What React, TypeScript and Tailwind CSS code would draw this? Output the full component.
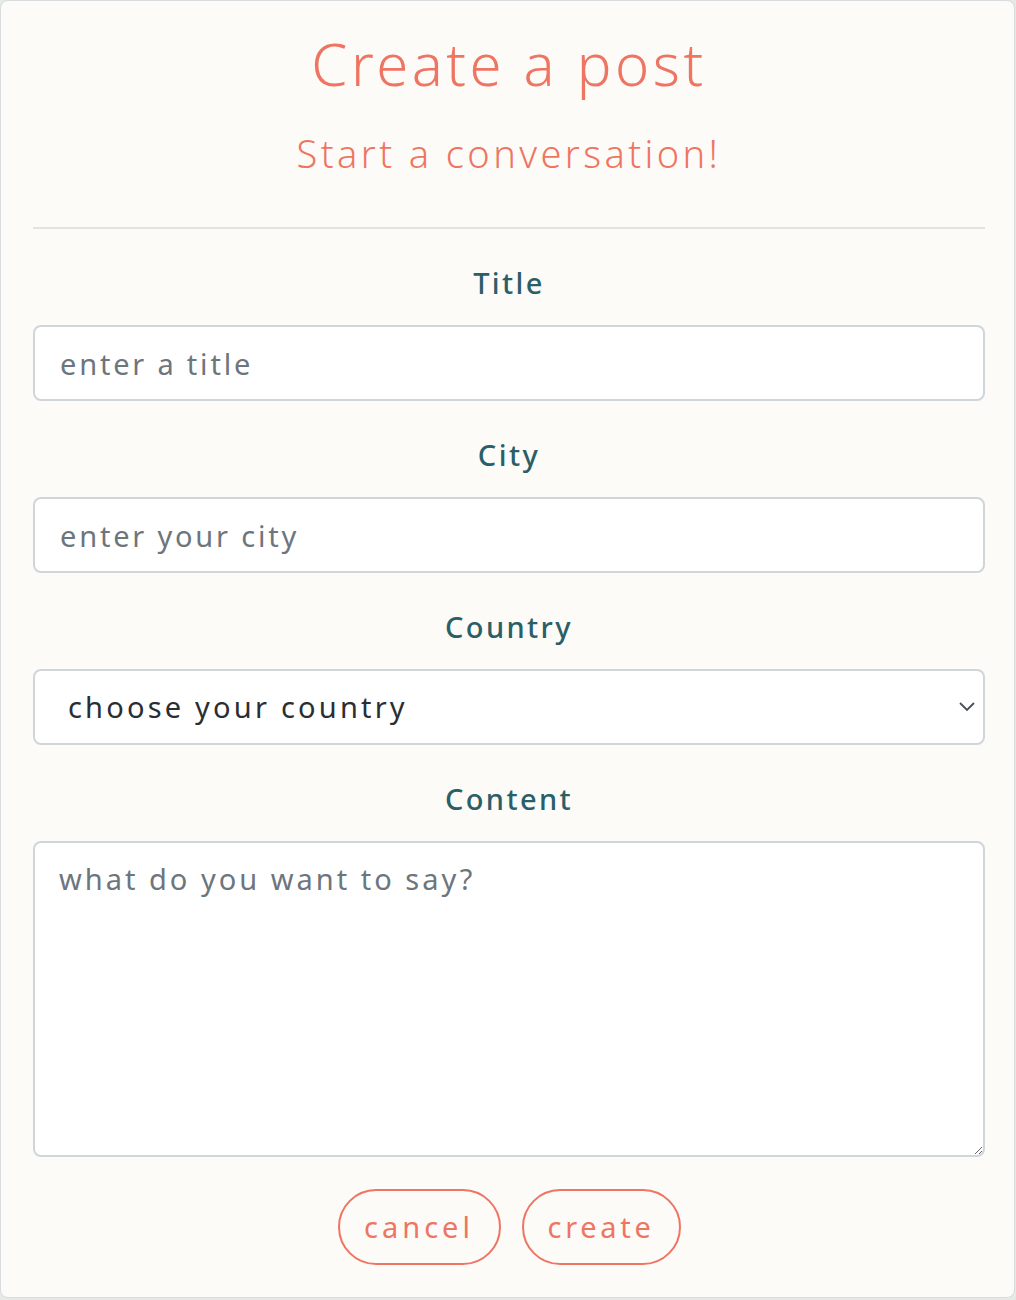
import React from "react"

const font = { fontFamily: "'Noto Sans', 'Open Sans', sans-serif" }

const fieldCls =
    "h-[76px] w-full bg-white border-2 border-[#d0d5da] rounded-[8px] px-[25px] text-[29px] tracking-[2.8px] text-[#212529] placeholder:text-[#6d757d] outline-none"

function Label({ children }: { children: React.ReactNode }) {
    return (
        <label className="block text-center text-[29px] leading-[44px] font-medium tracking-[2.4px] text-[#2b5f68] mb-[20px]">
            {children}
        </label>
    )
}

export default function App() {
    return (
        <div className="w-[1016px] h-[1300px] bg-[#e6eae6]" style={font}>
            <div className="w-[1015px] h-[1298px] bg-[#fcfbf8] border border-[#d9dcdc] rounded-[8px] pl-[32px] pr-[29px] flex flex-col">
                {/* Header */}
                <h1 className="mt-[27px] text-center text-[58px] leading-[72px] font-light text-[#ef7563] tracking-[3.5px]">
                    Create a post
                </h1>
                <h2 className="mt-[29px] text-center text-[38px] leading-[48px] font-light text-[#ef7563] tracking-[3.4px]">
                    Start a conversation!
                </h2>
                <hr className="mt-[50px] border-0 h-[2px] bg-[#e4e3df]" />

                <form className="flex flex-col mt-[32px]">
                    <Label>Title</Label>
                    <input placeholder="enter a title" className={fieldCls} />

                    <div className="mt-[32px]">
                        <Label>City</Label>
                    </div>
                    <input placeholder="enter your city" className={fieldCls} />

                    <div className="mt-[32px]">
                        <Label>Country</Label>
                    </div>
                    <div className="relative">
                        <select
                            defaultValue=""
                            className="appearance-none h-[76px] w-full bg-white border-2 border-[#d0d5da] rounded-[8px] pl-[33px] pr-[50px] text-[29px] tracking-[3.2px] text-[#2a2e33] outline-none"
                        >
                            <option value="" disabled>choose your country</option>
                        </select>
                        <svg
                            className="absolute right-[9px] top-[30px] pointer-events-none"
                            width="18"
                            height="14"
                            viewBox="0 0 18 14"
                            fill="none"
                            stroke="#4a4f55"
                            strokeWidth="1.8"
                        >
                            <path d="M2 4 L9 11 L16 4" />
                        </svg>
                    </div>

                    <div className="mt-[32px]">
                        <Label>Content</Label>
                    </div>
                    <textarea
                        placeholder="what do you want to say?"
                        className="h-[316px] w-full bg-white border-2 border-[#d0d5da] rounded-[8px] px-[24px] py-[14px] text-[29px] leading-[44px] tracking-[3px] text-[#212529] placeholder:text-[#6d757d] outline-none"
                    />

                    <div className="mt-[32px] flex justify-center gap-[21px]">
                        <button
                            type="button"
                            className="h-[76px] w-[163px] rounded-full border-2 border-[#ef7563] text-[29px] tracking-[4px] text-[#ef7563]"
                        >
                            cancel
                        </button>
                        <button
                            type="button"
                            className="h-[76px] w-[159px] rounded-full border-2 border-[#ef7563] text-[29px] tracking-[3.7px] text-[#ef7563]"
                        >
                            create
                        </button>
                    </div>
                </form>
            </div>
        </div>
    )
}
